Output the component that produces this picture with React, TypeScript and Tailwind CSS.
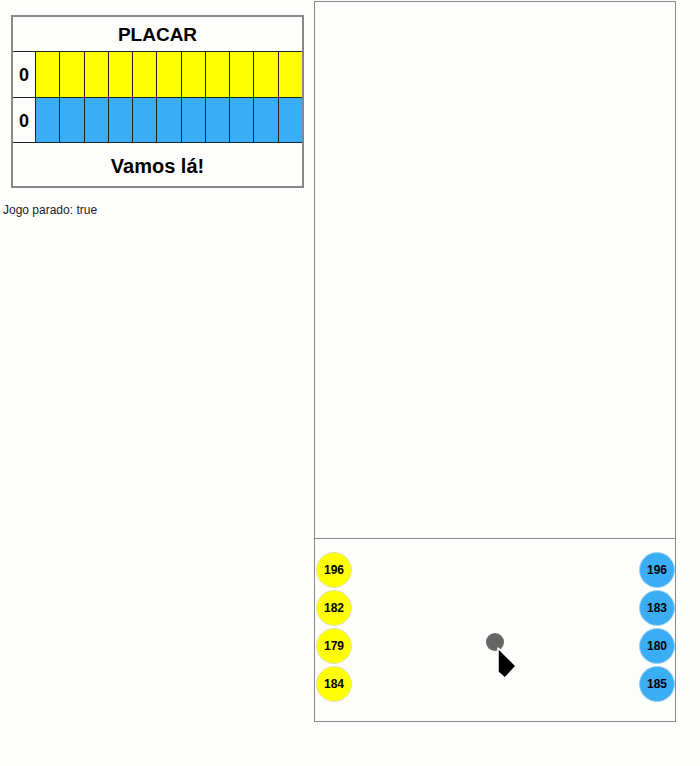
const YELLOW = [196, 182, 179, 184]
const BLUE = [196, 183, 180, 185]
const CELLS = Array.from({ length: 11 }, (_, i) => i)

function ScoreRow({ color }: { color: 'yellow' | 'blue' }) {
  return (
    <div className="flex h-full">
      <div className="w-[23px] bg-[#fdfdfb] border-r border-[#1c2626] flex items-center justify-center pt-[2px] text-[18px] font-bold text-black">
        0
      </div>
      {CELLS.map((i) => (
        <div
          key={i}
          className={
            (color === 'yellow' ? 'bg-[#ffff00]' : 'bg-[#3badf5]') +
            (i < 10 ? ' border-r border-[#1c2626]' : '') +
            ' flex-1'
          }
        />
      ))}
    </div>
  )
}

export default function App() {
  return (
    <div
      className="min-h-[766px] w-[700px] bg-[#fdfdfb] flex items-start text-black"
      style={{ fontFamily: '"Liberation Sans", Arial, sans-serif' }}
    >
      {/* Left: placar */}
      <div className="w-[304px] shrink-0">
        <div className="ml-[11px] mt-[15px] w-[293px] border-2 border-[#888888] bg-[#fdfdfb]">
          <div className="h-[34px] flex items-center justify-center pt-[2px] text-[19px] font-bold">PLACAR</div>
          <div className="h-[47px] border-y border-[#1c2626]">
            <ScoreRow color="yellow" />
          </div>
          <div className="h-[45px] border-b border-[#1c2626]">
            <ScoreRow color="blue" />
          </div>
          <div className="h-[43px] flex items-center justify-center pt-[2px] text-[20px] font-bold">Vamos lá!</div>
        </div>
        <p className="ml-[3px] mt-[15px] text-[12px] leading-[14px] text-[#222]">Jogo parado: true</p>
      </div>

      {/* Right: campo */}
      <div className="ml-[10px] mt-[1px] w-[362px] border border-[#888888] shrink-0">
        <div className="h-[536px]" />
        <div className="relative h-[183px] border-t border-[#888888]">
          {YELLOW.map((n, i) => (
            <div
              key={'y' + i}
              className="absolute left-[1px] w-[36px] h-[36px] rounded-full bg-[#ffff00] border border-[#e2e2c0] flex items-center justify-center text-[12px] font-bold"
              style={{ top: 13 + i * 38 }}
            >
              {n}
            </div>
          ))}
          {BLUE.map((n, i) => (
            <div
              key={'b' + i}
              className="absolute left-[324px] w-[36px] h-[36px] rounded-full bg-[#3badf5] border border-[#9fd2f2] flex items-center justify-center text-[12px] font-bold"
              style={{ top: 13 + i * 38 }}
            >
              {n}
            </div>
          ))}
          {/* bola */}
          <div className="absolute left-[171px] top-[94px] w-[18px] h-[18px] rounded-full bg-[#666666]" />
          {/* cursor */}
          <svg className="absolute left-[181px] top-[107px]" width="24" height="34" viewBox="0 0 24 34">
            <path d="M2 2 L2 26 L9 32 L20 20 Z" fill="#000" stroke="#fff" strokeWidth="1.5" strokeLinejoin="round" />
          </svg>
        </div>
      </div>
    </div>
  )
}
